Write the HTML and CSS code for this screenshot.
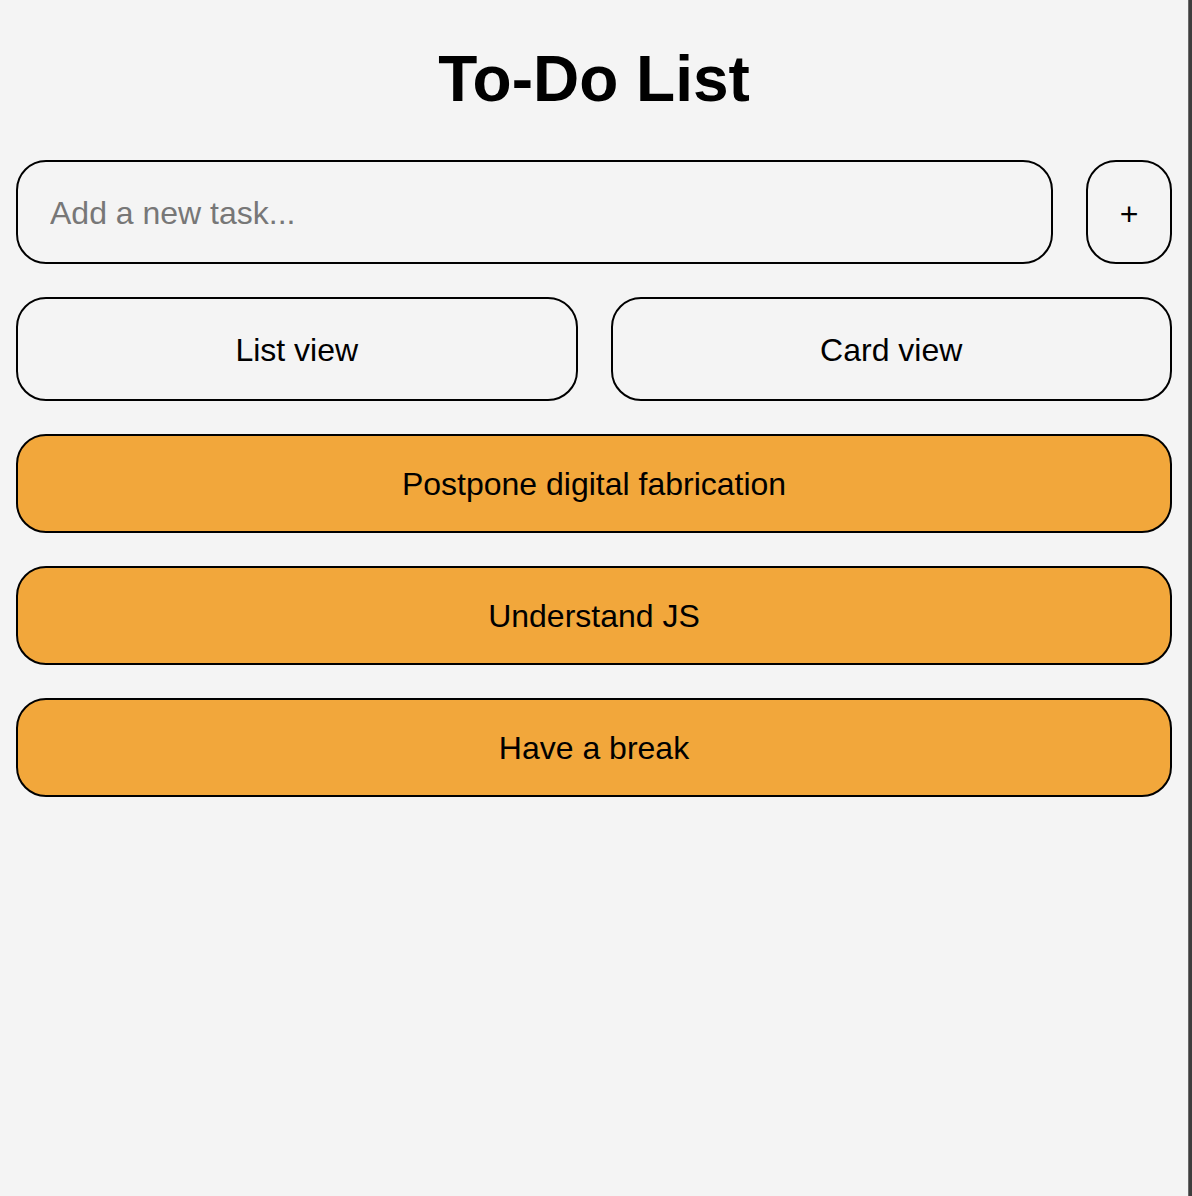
FILE: index.html
```html
<!DOCTYPE html>
<html lang="en">
<head>
<meta charset="utf-8">
<title>To-Do List</title>
<link rel="stylesheet" href="styles.css">
</head>
<body>
<div class="page">
  <main class="app">
    <h1 class="title">To-Do List</h1>
    <div class="add-row">
      <input class="task-input" type="text" placeholder="Add a new task...">
      <button class="add-btn" type="button">+</button>
    </div>
    <div class="view-row">
      <button class="view-btn" type="button">List view</button>
      <button class="view-btn" type="button">Card view</button>
    </div>
    <ul class="tasks">
      <li class="task">Postpone digital fabrication</li>
      <li class="task">Understand JS</li>
      <li class="task">Have a break</li>
    </ul>
  </main>
  <div class="edge"></div>
</div>
</body>
</html>
```

FILE: styles.css
```css
html, body {
  margin: 0;
  padding: 0;
  height: 100%;
}

body {
  background: #f4f4f4;
  font-family: "Liberation Sans", Arial, Helvetica, sans-serif;
  color: #000;
}

.page {
  display: flex;
  min-height: 100%;
}

.app {
  flex: 1;
  min-width: 0;
  padding: 42px 16px 40px;
  display: flex;
  flex-direction: column;
  gap: 33px;
}

.edge {
  width: 4px;
  flex: none;
  background: #3d3d3d;
  border-left: 1px solid #6a6a6a;
  box-sizing: border-box;
}

.title {
  margin: 0 0 11px;
  font-size: 64px;
  line-height: 74px;
  font-weight: 700;
  text-align: center;
}

.add-row {
  display: flex;
  gap: 33px;
}

.task-input {
  flex: 1 1 0;
  min-width: 0;
  height: 104px;
  box-sizing: border-box;
  border: 2px solid #000;
  border-radius: 30px;
  background: #f4f4f4;
  padding: 2px 32px 0;
  font-family: inherit;
  font-size: 32px;
  color: #000;
  outline: none;
}

.task-input::placeholder {
  color: #777;
}

.add-btn {
  width: 86px;
  height: 104px;
  flex: 0 0 86px;
  box-sizing: border-box;
  border: 2px solid #000;
  border-radius: 30px;
  background: #f4f4f4;
  font-family: inherit;
  font-size: 32px;
  color: #000;
  padding: 5px 0 0;
}

.view-row {
  display: flex;
  gap: 33px;
}

.view-btn {
  flex: 1 1 0;
  min-width: 0;
  height: 104px;
  box-sizing: border-box;
  border: 2px solid #000;
  border-radius: 30px;
  background: #f4f4f4;
  font-family: inherit;
  font-size: 32px;
  color: #000;
  padding: 2px 0 0;
}

.tasks {
  list-style: none;
  margin: 0;
  padding: 0;
  display: flex;
  flex-direction: column;
  gap: 33px;
}

.task {
  height: 99px;
  box-sizing: border-box;
  border: 2px solid #000;
  border-radius: 30px;
  background: #f2a73b;
  display: flex;
  align-items: center;
  justify-content: center;
  font-size: 32px;
  padding-top: 2px;
}
```
